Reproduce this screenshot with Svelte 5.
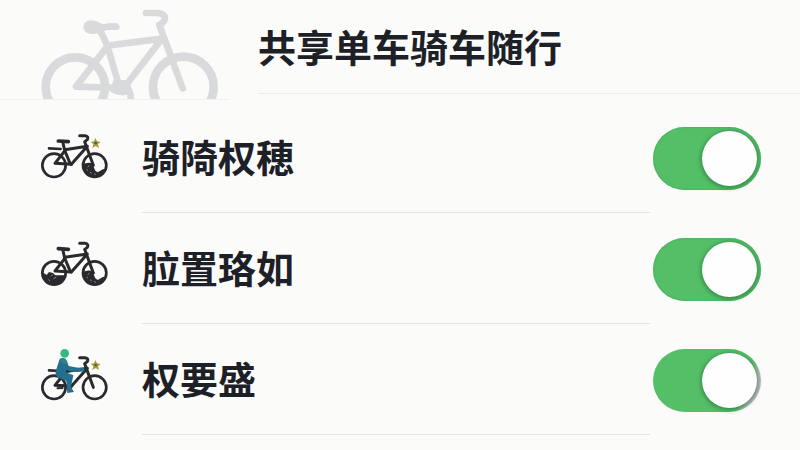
<script lang="ts">
  type Icon = 'front' | 'both' | 'person';

  interface Setting {
    id: string;
    label: string;
    icon: Icon;
    on: boolean;
  }

  let settings = $state<Setting[]>([
    { id: 'ride', label: '骑陭权穂', icon: 'front', on: true },
    { id: 'place', label: '䏠置珞如', icon: 'both', on: true },
    { id: 'rights', label: '权要盛', icon: 'person', on: true },
  ]);
</script>

<main>
  <header>
    <div class="art">
      <svg class="hero" viewBox="0 0 600 297" aria-hidden="true">
        <g fill="none" stroke="#d9dadc" stroke-linecap="round" stroke-linejoin="round">
          <g stroke-width="26">
            <circle cx="136" cy="261" r="89" />
            <circle cx="460" cy="261" r="91" />
          </g>
          <g stroke-width="20">
            <path d="M212 95 L232 137 L265 250" />
            <path d="M232 137 L396 116 L288 255" />
            <path d="M230 142 L138 260 L285 264" />
            <path d="M348 39 H382 Q404 40 405 55 Q404 68 388 75 L458 265" />
            <path d="M292 262 Q302 275 303 300" />
          </g>
        </g>
        <path
          d="M160 80 Q162 62 184 61 Q200 62 212 70 Q222 74 234 70 L258 69 Q270 72 269 84 Q268 90 258 90 L230 90 Q205 103 184 102 Q160 98 160 80Z M250 240 H300 Q310 268 290 284 Q262 290 240 274Z"
          fill="#d9dadc"
        />
      </svg>
    </div>
    <h1>共享单车骑车随行</h1>
  </header>

  <ul>
    {#each settings as item (item.id)}
      <li>
        <svg class="bike" viewBox="0 0 270 210" aria-hidden="true">
          <g transform={item.icon === 'both' ? 'translate(0 -10)' : undefined}>
            <g fill="none" stroke="#2a292e" stroke-linecap="round" stroke-linejoin="round">
              <g stroke-width="8">
                <circle cx="72" cy="127" r="35" />
                <circle cx="194" cy="127" r="35" />
              </g>
              <g stroke-width="9">
                <path d="M99 60 L104 82 L121 123" />
                <path d="M104 80 L172 70 L124 124" />
                <path d="M104 84 L75 121 L124 124" />
                <path d="M149 38 H165 Q177 40 172 50 L164 56 L190 127" />
              </g>
              {#if item.icon !== 'person'}
                <path d="M85 54 L115 56" stroke-width="11" />
              {/if}
              {#if item.icon !== 'both'}
                <path d="M57 76 L92 78" stroke-width="8" />
              {/if}
            </g>

            {#if item.icon === 'both'}
              <path d="M37 124 L50 133 L57 124 L69 127 L76 134 L106 134 Q102 160 74 162 Q42 162 37 124Z" fill="#2a292e" />
              <path d="M63 137 l6 -6 M70 144 l9 -5 M56 146 l4 5" stroke="#b9babc" stroke-width="2" />
            {/if}
            {#if item.icon !== 'person'}
              <path d="M158 124 Q176 116 187 122 L196 143 L203 148 L220 138 L226 142 Q216 162 195 163 Q160 162 158 124Z" fill="#2a292e" />
              <path d="M173 132 l5 -4 M180 147 l5 4 M193 151 l4 5 M170 140 l4 2" stroke="#c5c6c8" stroke-width="2" />
            {/if}

            {#if item.icon === 'person'}
              <path
                d="M89 42 Q104 34 111 48 L116 63 Q140 69 163 69 V79 Q132 84 108 75 L108 82 L130 91 L123 126 L132 141 L112 144 L109 108 L82 97 Q72 87 80 70Z"
                fill="#246f8d"
              />
              <path d="M89 42 Q104 35 110 48 L113 60 L96 55Z" fill="#26868d" />
              <circle cx="104" cy="25" r="13" fill="#35b982" />
              <path d="M73 121 h28 M80 130 l20 -1" stroke="#2a292e" stroke-width="6" />
            {/if}
            {#if item.icon !== 'both'}
              <path
                d="M196 45 L201 55 L212 57 L204 63 L207 75 L197 69 L187 75 L190 63 L182 57 L192 55Z"
                fill="#a49c3c"
              />
              <circle cx="197" cy="60" r="4" fill="#5f5b2d" />
            {/if}
          </g>
        </svg>
        <div class="body">
          <label for={item.id}>{item.label}</label>
        </div>
        <input
          id={item.id}
          type="checkbox"
          role="switch"
          class:shaded={item.icon === 'person'}
          bind:checked={item.on}
        />
      </li>
    {/each}
  </ul>
</main>

<style>
  :global(body) {
    margin: 0;
    background: #fbfbfa;
  }
  main {
    color: #1d2127;
    font-family: "Noto Sans CJK SC", "Noto Sans", sans-serif;
  }
  header {
    display: flex;
    align-items: flex-start;
  }
  .art {
    padding-left: 30px;
    border-bottom: 1px solid #f0f0ef;
  }
  .hero {
    display: block;
    width: 200px;
    height: 99px;
  }
  h1 {
    flex: 1;
    margin: 0 0 0 28px;
    padding: 18px 0 19px;
    border-bottom: 1px solid #ededec;
    font-size: 38px;
    line-height: 56px;
    font-weight: 700;
  }
  ul {
    margin: 0;
    padding: 2px 0 0;
    list-style: none;
  }
  li {
    display: flex;
    align-items: center;
    box-sizing: border-box;
    min-height: 111px;
    padding: 1px 39px 0 30px;
  }
  .bike {
    width: 90px;
    height: 70px;
    flex-shrink: 0;
  }
  .body {
    display: flex;
    align-items: center;
    align-self: stretch;
    flex: 1;
    margin: 0 3px 0 22px;
    border-bottom: 1px solid #e5e5e5;
  }
  label {
    padding-bottom: 4px;
    font-size: 38px;
    line-height: 56px;
    font-weight: 700;
  }
  input {
    appearance: none;
    display: flex;
    align-items: center;
    box-sizing: border-box;
    width: 108px;
    height: 63px;
    margin: 0;
    padding: 0 4px;
    border-radius: 32px;
    background: #ccc;
    flex-shrink: 0;
    cursor: pointer;
  }
  input::before {
    content: "";
    width: 55px;
    height: 55px;
    border-radius: 50%;
    background: #fefefe;
    box-shadow: 0 1px 4px 1px rgba(20, 80, 40, 0.5);
  }
  input:checked {
    justify-content: flex-end;
    background: #54bf67;
    box-shadow: inset 0 0 2px #3f9d54;
  }
  input.shaded:checked {
    background: linear-gradient(110deg, #54bf67 80%, #b9babd 88%);
    box-shadow: none;
  }
</style>
